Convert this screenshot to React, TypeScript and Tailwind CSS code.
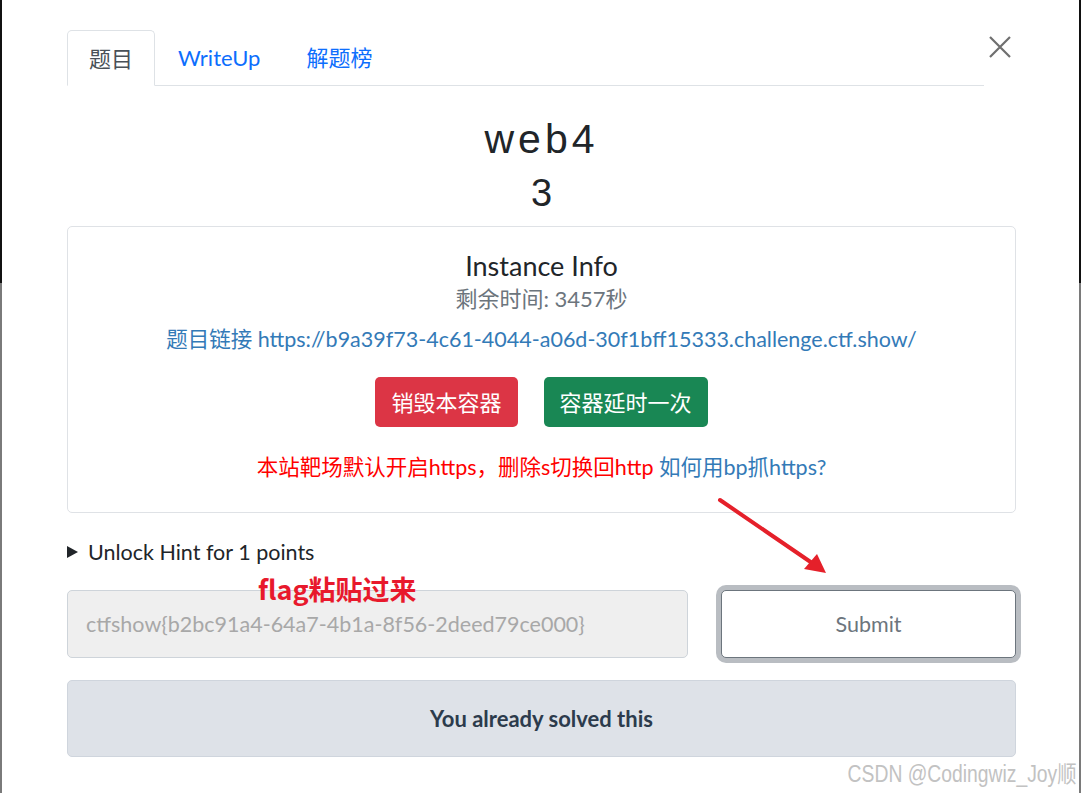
import { useState } from "react";

const bodyFont = "font-['Lato','Noto_Sans_CJK_SC',sans-serif]";

const tabs = ["题目", "WriteUp", "解题榜"];

export default function App() {
  const [activeTab] = useState(0);
  const flag = "ctfshow{b2bc91a4-64a7-4b1a-8f56-2deed79ce000}";

  return (
    <div
      className={`relative flex h-[793px] w-[1081px] overflow-hidden bg-white ${bodyFont} text-[#212529]`}
    >
      {/* backdrop edges */}
      <div className="flex w-[2px] flex-col">
        <div className="h-[283px] bg-[#111111]" />
        <div className="flex-1 bg-[#7a7a7a]" />
      </div>

      <div className="flex flex-1 flex-col pt-[30px] pr-[63px] pl-[65px]">
        <div className="flex">
          <ul className="flex h-[56px] flex-1 border-b border-[#dee2e6]">
            {tabs.map((tab, i) => (
              <li
                key={tab}
                className={
                  i === activeTab
                    ? "-mb-px flex items-center rounded-t-[5px] border border-[#dee2e6] border-b-white bg-white px-[21px] text-[22px] text-[#495057]"
                    : "flex items-center px-[23px] text-[22px] text-[#0d6efd]"
                }
              >
                {tab}
              </li>
            ))}
          </ul>
          <div className="flex w-[32px] justify-center pt-[6px]">
            <svg width="22" height="22" viewBox="0 0 22 22" className="text-[#6f6f6f]">
              <path d="M1 1L21 21M21 1L1 21" stroke="currentColor" strokeWidth="2.2" />
            </svg>
          </div>
        </div>

        <h3 className="mt-[31px] text-center font-['Liberation_Sans',sans-serif] text-[41px] leading-[44px] tracking-[4px] text-[#212529]">
          web4
        </h3>
        <h4 className="mt-[12px] text-center font-['Liberation_Sans',sans-serif] text-[38px] leading-[40px] text-[#212529]">
          3
        </h4>

        <div className="mt-[13px] flex flex-col items-center rounded-[5px] border border-[#dfe2e6] px-6 pt-[24px] pb-[30px]">
          <h5 className="text-[27px] leading-[29px] text-[#212529]">Instance Info</h5>
          <p className="mt-[4px] text-[22px] leading-[30px] text-[#6c757d]">剩余时间: 3457秒</p>
          <a className="mt-[10px] text-[21.5px] leading-[30px] text-[#337ab7]">
            题目链接 https://b9a39f73-4c61-4044-a06d-30f1bff15333.challenge.ctf.show/
          </a>
          <div className="mt-[23px] flex gap-[26px]">
            <button className="h-[50px] rounded-[5px] bg-[#dc3545] px-[16px] text-[22px] text-white">
              销毁本容器
            </button>
            <button className="h-[50px] rounded-[5px] bg-[#198754] px-[16px] text-[22px] text-white">
              容器延时一次
            </button>
          </div>
          <p className="mt-[25px] text-[21.5px] leading-[30px]">
            <span className="text-[#ff0000]">本站靶场默认开启https，删除s切换回http</span>{" "}
            <span className="text-[#337ab7]">如何用bp抓https?</span>
          </p>
        </div>

        <div className="mt-[24px] flex items-center gap-[10px] text-[21.5px] leading-[30px]">
          <svg width="11" height="12" viewBox="0 0 11 12">
            <path d="M0 0L11 6L0 12Z" fill="#212529" />
          </svg>
          <span>Unlock Hint for 1 points</span>
        </div>

        <div className="mt-[23px] flex gap-[33px]">
          <div className="flex h-[68px] w-[621px] items-center rounded-[5px] border border-[#ced4da] bg-[#efefef] px-[18px] text-[21.5px] text-[#a8a8a8]">
            {flag}
          </div>
          <button className="h-[68px] flex-1 rounded-[5px] border border-[#6c757d] bg-white text-[21.5px] text-[#6c757d] shadow-[0_0_0_5px_#b9bdc2]">
            Submit
          </button>
        </div>

        <div className="mt-[22px] flex h-[77px] items-center justify-center rounded-[5px] border border-[#cfd5dd] bg-[#dee2e8] text-[22px] font-bold text-[#2c3b4c]">
          You already solved this
        </div>
      </div>

      <div className="flex w-[2px] flex-col">
        <div className="h-[283px] bg-[#111111]" />
        <div className="flex-1 bg-[#7a7a7a]" />
      </div>

      {/* annotations */}
      <span className="absolute top-[571px] left-[258px] font-['Noto_Sans_CJK_SC',sans-serif] text-[27px] leading-[36px] font-bold text-[#e8192c]">
        flag粘贴过来
      </span>
      <svg className="absolute top-0 left-0" width="1081" height="793" viewBox="0 0 1081 793">
        <path d="M720 500L815 565" stroke="#e5202a" strokeWidth="4" strokeLinecap="round" />
        <path d="M826 573L804 569L817 554Z" fill="#e5202a" />
      </svg>
      <span className="absolute right-[4px] bottom-[6px] origin-right scale-x-[0.84] font-['Liberation_Sans','Noto_Sans_CJK_SC',sans-serif] text-[23px] leading-[26px] text-[#c2c2c2]">
        CSDN @Codingwiz_Joy顺
      </span>
    </div>
  );
}
